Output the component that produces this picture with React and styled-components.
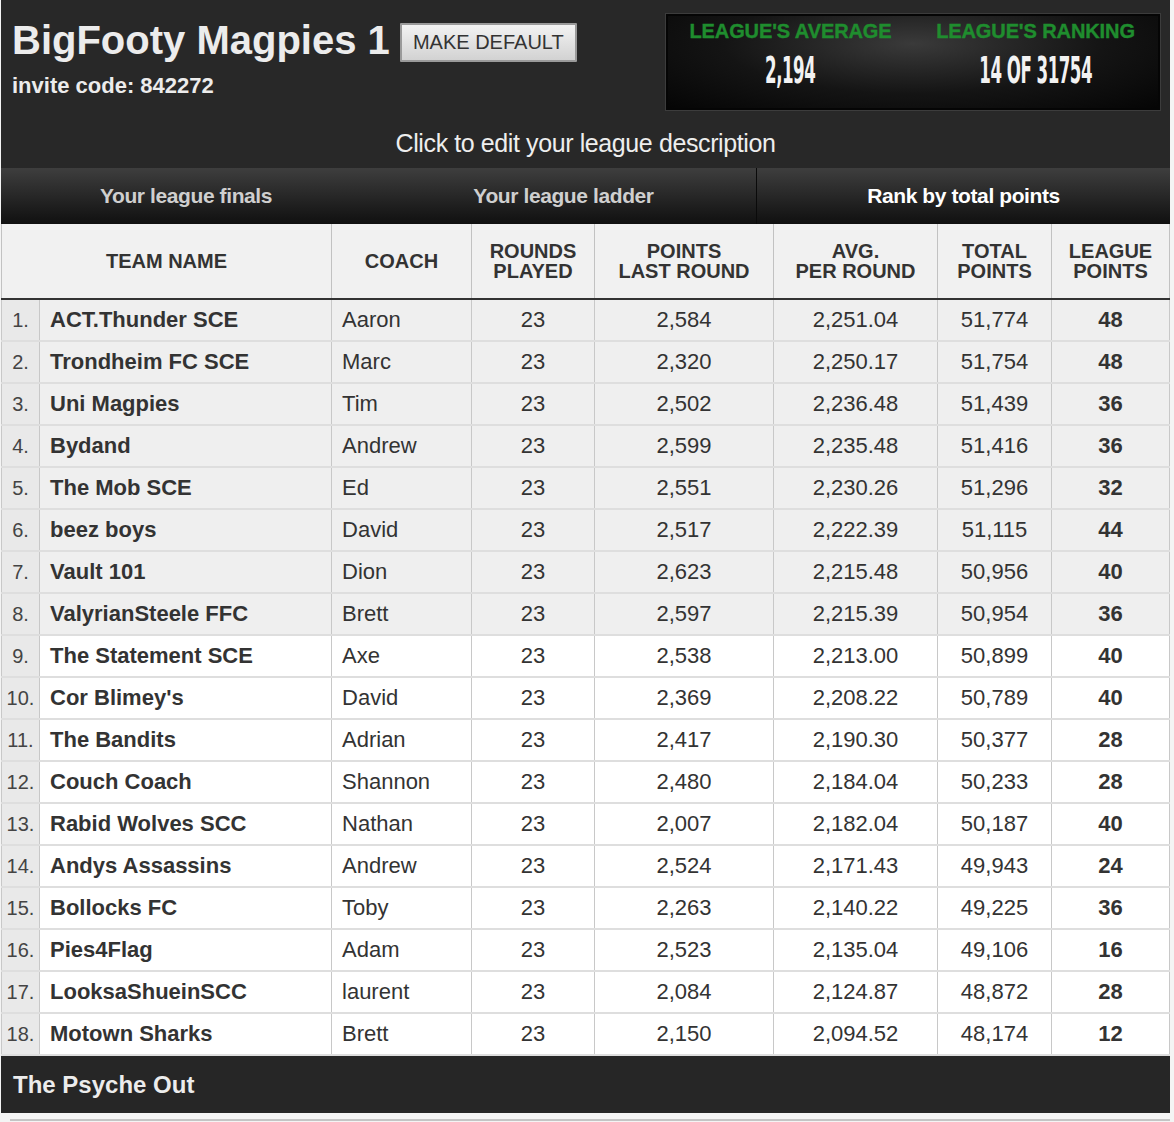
import React from "react";
import styled, { createGlobalStyle } from "styled-components";

const Global = createGlobalStyle`
  html, body { margin: 0; padding: 0; background: #f4f4f4; }
  body { font-family: "Liberation Sans", Arial, sans-serif; }
`;

const Panel = styled.div`
  width: 1169px;
  margin-left: 1px;
  background: #282828;
`;

const Header = styled.header`
  height: 118px;
  display: flex;
  justify-content: space-between;
  align-items: flex-start;
  padding: 0 10px 0 11px;
  box-sizing: border-box;
`;

const TitleBlock = styled.div`
  display: flex;
  flex-direction: column;
  padding-top: 17px;
`;

const TitleRow = styled.div`
  display: flex;
  align-items: center;
  gap: 10px;
`;

const Title = styled.h1`
  margin: 0;
  font-size: 40px;
  font-weight: bold;
  color: #ececec;
  line-height: 46px;
`;

const Button = styled.button`
  height: 39px;
  width: 177px;
  padding: 0;
  font-family: "Liberation Sans", Arial, sans-serif;
  font-size: 20px;
  color: #333;
  background: linear-gradient(#f3f3f3, #d2d2d2);
  border: 2px solid #9a9a9a;
  border-radius: 1px;
  margin-top: 4px;
`;

const Invite = styled.div`
  margin-top: 10px;
  font-size: 22px;
  font-weight: bold;
  color: #ececec;
`;

const StatsBox = styled.div`
  margin-top: 14px;
  width: 494px;
  height: 96px;
  box-sizing: border-box;
  background: radial-gradient(ellipse at 50% 30%, #3a3a3a 0%, #141414 55%, #050505 100%);
  border: 2px solid #050505;
  box-shadow: 0 0 0 1px #3c3c3c;
  display: grid;
  grid-template-columns: 1fr 1fr;
`;

const Stat = styled.div`
  display: flex;
  flex-direction: column;
  align-items: center;
  padding-top: 4px;
`;

const StatLabel = styled.div`
  font-size: 20px;
  font-weight: bold;
  color: #1f8d2e;
  letter-spacing: -0.1px;
  -webkit-text-stroke: 0.4px #1f8d2e;
`;

const StatValue = styled.div`
  margin-top: 7px;
  font-family: "DejaVu Sans Condensed", "DejaVu Sans", sans-serif;
  font-weight: bold;
  font-size: 37px;
  color: #f2f2f2;
  transform: scaleX(0.5);
  letter-spacing: -1px;
  line-height: 42px;
`;

const Description = styled.div`
  height: 50px;
  display: flex;
  align-items: center;
  justify-content: center;
  font-size: 25px;
  color: #eeeeee;
  letter-spacing: -0.4px;
`;

const Tabs = styled.nav`
  height: 56px;
  display: grid;
  grid-template-columns: 370px 385px 1fr;
  background: linear-gradient(#3e3e3e, #101010);
`;

const Tab = styled.div`
  display: flex;
  align-items: center;
  justify-content: center;
  font-size: 21px;
  font-weight: bold;
  letter-spacing: -0.4px;
  color: ${(p) => (p.$active ? "#ffffff" : "#cfcfcf")};
  border-left: ${(p) => (p.$active ? "1px solid #0a0a0a" : "none")};
`;

const Table = styled.table`
  width: 1169px;
  border-collapse: collapse;
  table-layout: fixed;
  background: #fff;
  border-left: 1px solid #aaa;
  border-right: 1px solid #aaa;
`;

const Th = styled.th`
  height: 74px;
  background: #f1f1f1;
  border: 1px solid #c2c2c2;
  border-top: none;
  border-bottom: 2px solid #333;
  font-size: 20px;
  font-weight: bold;
  color: #333;
  line-height: 20px;
  text-transform: uppercase;
  padding: 0;
`;

const Tr = styled.tr`
  height: 42px;
  background: ${(p) => (p.$finals ? "#efefef" : "#ffffff")};
`;

const Td = styled.td`
  border-left: 1px solid #c8c8c8;
  border-right: 1px solid #c8c8c8;
  border-bottom: 2px solid #dedede;
  font-size: 22px;
  color: #333;
  padding: 0 10px;
  text-align: ${(p) => p.$align || "center"};
  font-weight: ${(p) => (p.$bold ? "bold" : "normal")};
  white-space: nowrap;
`;

const RankTd = styled(Td)`
  background: #e9e9e9;
  font-size: 20px;
  color: #444;
  padding: 0;
  border-right: 1px solid #c8c8c8;
`;

const Footer = styled.div`
  height: 57px;
  display: flex;
  align-items: center;
  padding-left: 12px;
  background: #262626;
  font-size: 24px;
  font-weight: bold;
  color: #ececec;
`;

const BottomRule = styled.div`
  margin: 6px 4px 0 10px;
  border-top: 2px solid #c4c4c4;
`;

const rows = [
  ["ACT.Thunder SCE", "Aaron", "2,584", "2,251.04", "51,774", "48"],
  ["Trondheim FC SCE", "Marc", "2,320", "2,250.17", "51,754", "48"],
  ["Uni Magpies", "Tim", "2,502", "2,236.48", "51,439", "36"],
  ["Bydand", "Andrew", "2,599", "2,235.48", "51,416", "36"],
  ["The Mob SCE", "Ed", "2,551", "2,230.26", "51,296", "32"],
  ["beez boys", "David", "2,517", "2,222.39", "51,115", "44"],
  ["Vault 101", "Dion", "2,623", "2,215.48", "50,956", "40"],
  ["ValyrianSteele FFC", "Brett", "2,597", "2,215.39", "50,954", "36"],
  ["The Statement SCE", "Axe", "2,538", "2,213.00", "50,899", "40"],
  ["Cor Blimey's", "David", "2,369", "2,208.22", "50,789", "40"],
  ["The Bandits", "Adrian", "2,417", "2,190.30", "50,377", "28"],
  ["Couch Coach", "Shannon", "2,480", "2,184.04", "50,233", "28"],
  ["Rabid Wolves SCC", "Nathan", "2,007", "2,182.04", "50,187", "40"],
  ["Andys Assassins", "Andrew", "2,524", "2,171.43", "49,943", "24"],
  ["Bollocks FC", "Toby", "2,263", "2,140.22", "49,225", "36"],
  ["Pies4Flag", "Adam", "2,523", "2,135.04", "49,106", "16"],
  ["LooksaShueinSCC", "laurent", "2,084", "2,124.87", "48,872", "28"],
  ["Motown Sharks", "Brett", "2,150", "2,094.52", "48,174", "12"],
];

export default function App() {
  return (
    <>
      <Global />
      <Panel>
        <Header>
          <TitleBlock>
            <TitleRow>
              <Title>BigFooty Magpies 1</Title>
              <Button>MAKE DEFAULT</Button>
            </TitleRow>
            <Invite>invite code: 842272</Invite>
          </TitleBlock>
          <StatsBox>
            <Stat>
              <StatLabel>LEAGUE'S AVERAGE</StatLabel>
              <StatValue>2,194</StatValue>
            </Stat>
            <Stat>
              <StatLabel>LEAGUE'S RANKING</StatLabel>
              <StatValue>14 OF 31754</StatValue>
            </Stat>
          </StatsBox>
        </Header>
        <Description>Click to edit your league description</Description>
        <Tabs>
          <Tab>Your league finals</Tab>
          <Tab>Your league ladder</Tab>
          <Tab $active>Rank by total points</Tab>
        </Tabs>
        <Table>
          <colgroup>
            <col style={{ width: 38 }} />
            <col style={{ width: 292 }} />
            <col style={{ width: 140 }} />
            <col style={{ width: 123 }} />
            <col style={{ width: 179 }} />
            <col style={{ width: 164 }} />
            <col style={{ width: 114 }} />
            <col />
          </colgroup>
          <thead>
            <tr>
              <Th colSpan={2}>Team Name</Th>
              <Th>Coach</Th>
              <Th>Rounds<br />Played</Th>
              <Th>Points<br />Last Round</Th>
              <Th>Avg.<br />Per Round</Th>
              <Th>Total<br />Points</Th>
              <Th>League<br />Points</Th>
            </tr>
          </thead>
          <tbody>
            {rows.map((r, i) => (
              <Tr key={i} $finals={i < 8}>
                <RankTd>{i + 1}.</RankTd>
                <Td $align="left" $bold>{r[0]}</Td>
                <Td $align="left">{r[1]}</Td>
                <Td>23</Td>
                <Td>{r[2]}</Td>
                <Td>{r[3]}</Td>
                <Td>{r[4]}</Td>
                <Td $bold>{r[5]}</Td>
              </Tr>
            ))}
          </tbody>
        </Table>
        <Footer>The Psyche Out</Footer>
      </Panel>
      <BottomRule />
    </>
  );
}
